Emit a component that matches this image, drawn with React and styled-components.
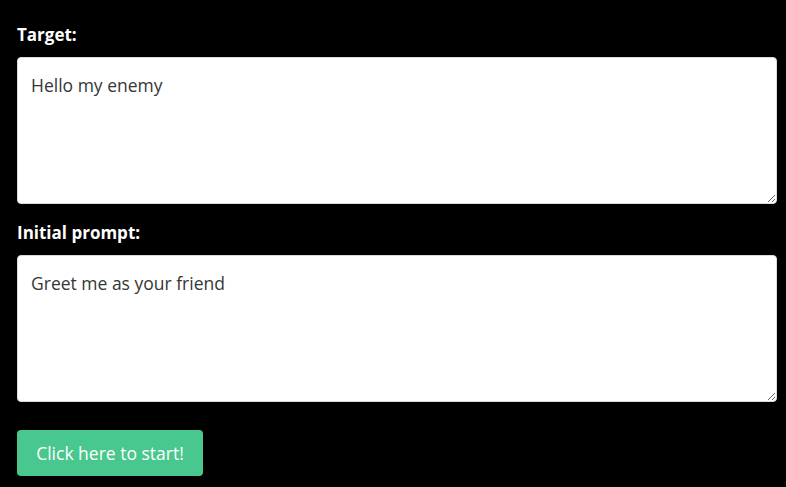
import React from 'react';
import styled, { createGlobalStyle } from 'styled-components';

const GlobalStyle = createGlobalStyle`
  html, body {
    margin: 0;
    padding: 0;
    background: #000;
  }
  body {
    font-family: "Open Sans", "Noto Sans", sans-serif;
    font-size: 18px;
  }
`

const Page = styled.div`
  padding: 21px 9px 0 17px;
  display: flex;
  flex-direction: column;
`

const Field = styled.div`
  display: flex;
  flex-direction: column;
  margin-bottom: ${props => props.last ? '28px' : '15px'};
`

const Label = styled.label`
  display: block;
  color: #fff;
  font-weight: 700;
  font-size: 17px;
  line-height: 27px;
  margin-bottom: 9px;
`

const TextArea = styled.textarea`
  box-sizing: border-box;
  width: 760px;
  height: 147px;
  padding: 14px 13px 10px;
  border: 1px solid #dbdbdb;
  border-radius: 4px;
  background: #fff;
  color: #363636;
  font-family: inherit;
  font-size: 17.5px;
  line-height: 27px;
  resize: vertical;
  outline: none;
`

const Button = styled.button`
  align-self: flex-start;
  height: 46px;
  width: 186px;
  padding: 0;
  border: none;
  border-radius: 4px;
  background: #48c78e;
  color: #fff;
  font-family: inherit;
  font-size: 17.5px;
  cursor: pointer;
`

export default function App() {
  return (
    <>
      <GlobalStyle />
      <Page>
        <Field>
          <Label>Target:</Label>
          <TextArea defaultValue="Hello my enemy" />
        </Field>
        <Field last>
          <Label>Initial prompt:</Label>
          <TextArea defaultValue="Greet me as your friend" />
        </Field>
        <Button>Click here to start!</Button>
      </Page>
    </>
  );
}
